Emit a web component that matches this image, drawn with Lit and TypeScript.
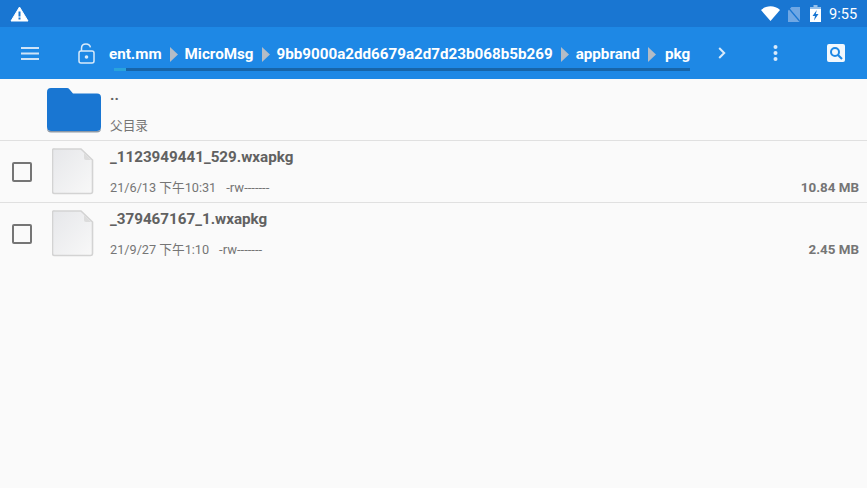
import { LitElement, html, css, svg } from "lit";
import { customElement } from "lit/decorators.js";

const sep = svg`<svg class="sep" width="8" height="15" viewBox="0 0 8 15"><path d="M0 0L8 7.5L0 15Z" fill="#b4bcc6"/></svg>`;

@customElement("app-root")
export class AppRoot extends LitElement {
  static styles = css`
    :host { display: flex; flex-direction: column; width: 867px; height: 488px; background: #fafafa; font-family: Roboto, "Noto Sans CJK SC", sans-serif; overflow: hidden; }
    svg { display: block; flex: none; }
    .status { height: 27px; background: #1976d2; display: flex; align-items: center; padding: 0 8px 0 10px; flex: none; }
    .spacer { flex: 1; }
    .time { color: #fff; font-size: 14.6px; margin-left: 8px; width: 30px; }
    .sim { margin: 1px 10px 0 8px; }
    .bar { height: 52px; background: #1e88e5; display: flex; align-items: center; flex: none; }
    .menu { margin-left: 21px; }
    .lock { margin-left: 39px; }
    .path { position: relative; width: 581px; margin-left: 14px; height: 52px; display: flex; align-items: center; color: #fff; font-weight: 700; font-size: 15.2px; white-space: nowrap; padding-top: 2px; box-sizing: border-box; }
    .sep { margin: 0 7px 0 8px; }
    .last { margin-left: 2px; }
    .track { position: absolute; left: 5px; right: 0; top: 41px; height: 3px; background: #1765a9; }
    .thumb { position: absolute; left: 0; top: 0; height: 3px; width: 12px; background: #29a3dc; }
    .chev { margin-left: 28px; }
    .dots { margin-left: 47px; }
    .search { margin-left: 49px; }
    .row { height: 61px; display: flex; flex: none; }
    .line { border-bottom: 1px solid #e0e0e0; }
    .check { width: 20px; height: 20px; box-sizing: border-box; border: 2px solid #757575; border-radius: 2px; margin: 21px 0 0 12px; flex: none; }
    .file { margin: 6px 0 0 20px; }
    .folder { margin: 9px 0 0 47px; }
    .main { flex: 1; display: flex; flex-direction: column; margin-left: 16px; padding-right: 8px; }
    .folder + .main { margin-left: 9px; }
    .name { font-size: 15.2px; font-weight: 700; color: #616161; margin-top: 7px; line-height: 18px; height: 18px; }
    .meta { display: flex; align-items: baseline; font-size: 12.7px; color: #757575; line-height: 16px; margin-top: 14px; }
    .perm { margin-left: 10px; font-size: 13px; }
    .size { margin-left: auto; font-size: 13.4px; font-weight: 700; color: #757575; }
  `;

  private fileIcon() {
    return svg`<svg class="file" width="42" height="48" viewBox="0 0 42 48">
      <defs><linearGradient id="fg" x1="0" y1="0" x2="1" y2="1"><stop offset="0" stop-color="#e6e7ea"/><stop offset="1" stop-color="#f8f8f8"/></linearGradient></defs>
      <path d="M2.5 2H29L40.5 13V44.5a2 2 0 0 1-2 2H2.5a2 2 0 0 1-2-2V3.5A1.5 1.5 0 0 1 2.5 2Z" fill="url(#fg)" stroke="#d3d3d3" stroke-width="1.6"/>
      <path d="M32 6L39 13H34a2 2 0 0 1-2-2Z" fill="#dcdcdc"/>
    </svg>`;
  }

  private fileRow(name: string, date: string, perm: string, size: string, line: boolean) {
    return html`<div class="row ${line ? "line" : ""}">
      <div class="check"></div>
      ${this.fileIcon()}
      <div class="main">
        <div class="name">${name}</div>
        <div class="meta"><span>${date}</span><span class="perm">${perm}</span><span class="size">${size}</span></div>
      </div>
    </div>`;
  }

  render() {
    return html`
      <div class="status">
        <svg width="19" height="16" viewBox="0 0 19 16"><path d="M9.5 1L18 15H1Z" fill="#fff" stroke="#fff" stroke-linejoin="round"/><rect x="8.5" y="5.5" width="2" height="5" fill="#1976d2"/><rect x="8.5" y="11.5" width="2" height="2" fill="#1976d2"/></svg>
        <div class="spacer"></div>
        <svg width="19" height="15" viewBox="0 0 19 15"><path d="M0 4C5.2-.9 13.8-.9 19 4L9.5 15Z" fill="#fff"/></svg>
        <svg class="sim" width="12" height="15" viewBox="0 0 12 15"><path d="M3.5 0H12V15H0V3.5Z" fill="#6fa7e4"/><path d="M0 .5L12 14.5" stroke="#1976d2" stroke-width="1.4"/></svg>
        <svg width="11" height="17" viewBox="0 0 11 17"><path d="M3.5 0H7.5V2H11V4H0V2H3.5Z" fill="#fff" opacity=".55"/><path d="M0 4H11V17H0Z" fill="#fff"/><path d="M6.8 5L2.5 11H5L4 15.5L8.5 9H5.8Z" fill="#1976d2"/></svg>
        <span class="time">9:55</span>
      </div>
      <div class="bar">
        <svg class="menu" width="18" height="13" viewBox="0 0 18 13"><path d="M0 1H18M0 6.5H18M0 12H18" stroke="#cfe4f8" stroke-width="2"/></svg>
        <svg class="lock" width="17" height="21" viewBox="0 0 17 21"><path d="M3.5 8V5.2C3.5 2.5 5.5 1 8 1c2.2 0 4 1.2 4.4 3.4" fill="none" stroke="#d9eafa" stroke-width="1.5"/><rect x="1" y="8" width="15" height="12" rx="2" fill="none" stroke="#d9eafa" stroke-width="1.5"/><circle cx="8.5" cy="14" r="1.8" fill="#d9eafa"/></svg>
        <div class="path">
          <span>ent.mm</span>${sep}
          <span>MicroMsg</span>${sep}
          <span>9bb9000a2dd6679a2d7d23b068b5b269</span>${sep}
          <span>appbrand</span>${sep}
          <span class="last">pkg</span>
          <div class="track"><div class="thumb"></div></div>
        </div>
        <svg class="chev" width="8" height="12" viewBox="0 0 8 12"><path d="M1.2 1L6.2 6L1.2 11" fill="none" stroke="#d9eafa" stroke-width="2"/></svg>
        <svg class="dots" width="5" height="16" viewBox="0 0 5 16"><circle cx="2.5" cy="2" r="2" fill="#d9eafa"/><circle cx="2.5" cy="8" r="2" fill="#d9eafa"/><circle cx="2.5" cy="14" r="2" fill="#d9eafa"/></svg>
        <svg class="search" width="18" height="18" viewBox="0 0 18 18"><rect width="18" height="18" rx="2" fill="#f2f8fd"/><circle cx="8" cy="8" r="4" fill="none" stroke="#1e88e5" stroke-width="2"/><path d="M11 11L15 15" stroke="#1e88e5" stroke-width="2.2"/></svg>
      </div>
      <div class="row line">
        <svg class="folder" width="54" height="45" viewBox="0 0 54 45"><path d="M4 0H20a3 3 0 0 1 2.4 1.2L26 5.5H50a4 4 0 0 1 4 4V39a4 4 0 0 1-4 4H4a4 4 0 0 1-4-4V4a4 4 0 0 1 4-4Z" fill="#1976d2"/><path d="M0 39a4 4 0 0 0 4 4H50a4 4 0 0 0 4-4v1.5a4 4 0 0 1-4 4H4a4 4 0 0 1-4-4Z" fill="#8d99a6"/></svg>
        <div class="main">
          <div class="name">..</div>
          <div class="meta"><span>父目录</span></div>
        </div>
      </div>
      ${this.fileRow("_1123949441_529.wxapkg", "21/6/13 下午10:31", "-rw-------", "10.84 MB", true)}
      ${this.fileRow("_379467167_1.wxapkg", "21/9/27 下午1:10", "-rw-------", "2.45 MB", false)}
    `;
  }
}
